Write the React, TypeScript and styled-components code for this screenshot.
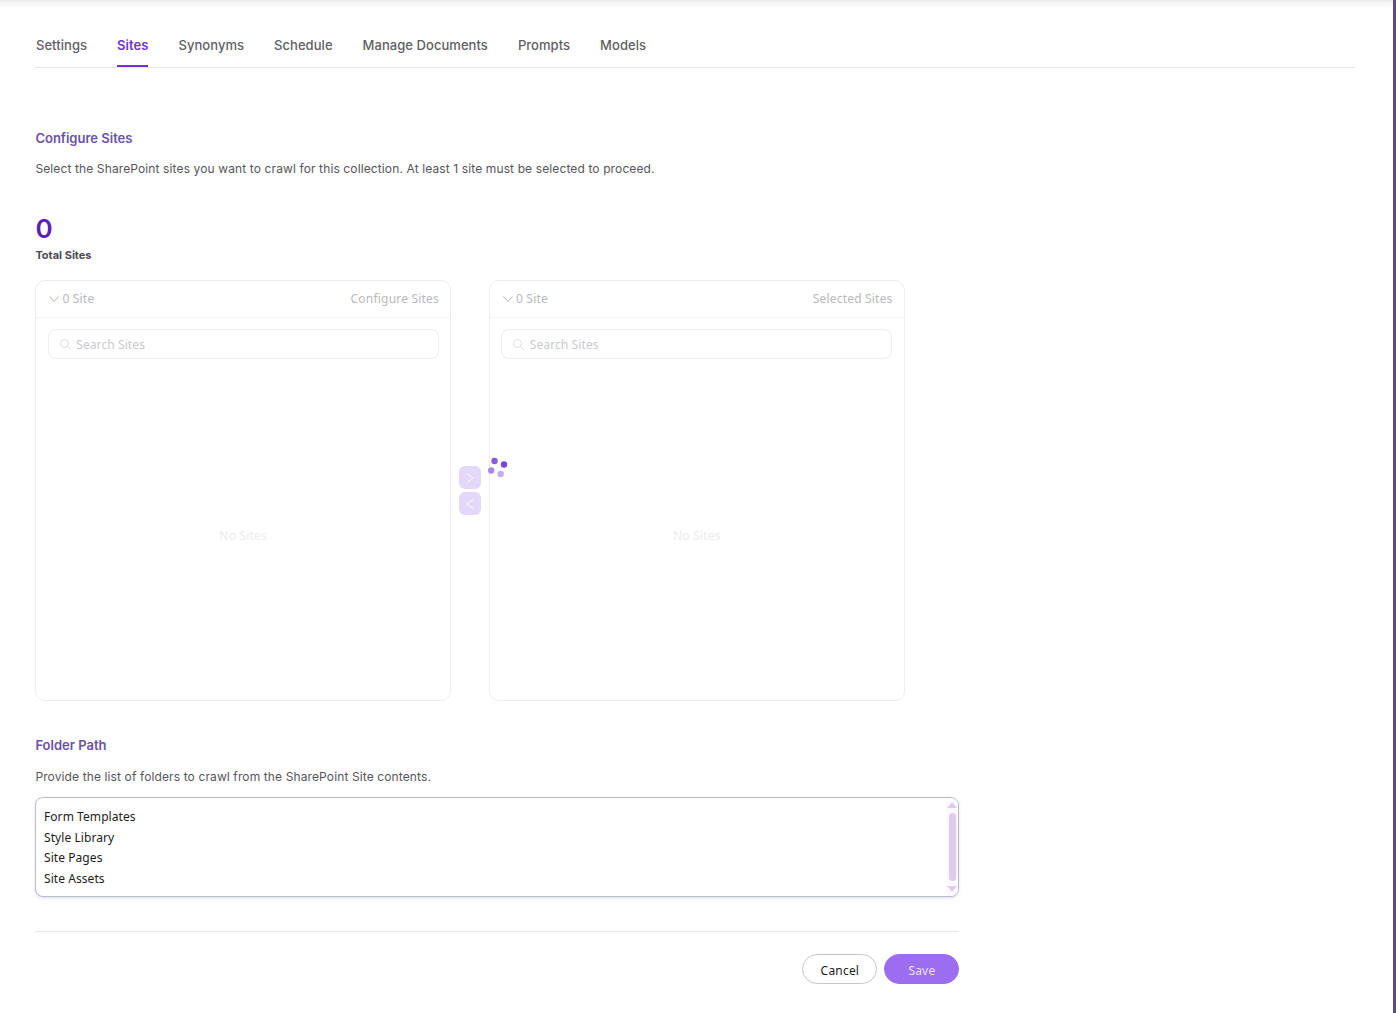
import React from "react";
import styled, { createGlobalStyle } from "styled-components";

const Global = createGlobalStyle`
  html, body { margin: 0; padding: 0; background: #fff; }
  body { font-family: Inter, "Liberation Sans", sans-serif; }
`;

const Page = styled.div`
  height: 1013px;
  overflow: hidden;
  box-sizing: border-box;
  border-right: 3px solid #5b4b8a;
  background: linear-gradient(#ececec 0, #f8f8f8 4px, #fff 9px);
  padding: 26px 38px 0 35.4px;
`;

const Tabs = styled.nav`
  display: flex;
  gap: 30px;
  height: 41px;
  padding-left: 0.6px;
  border-bottom: 1px solid #e5e5ea;
`;

const Tab = styled.a<{ $active?: boolean }>`
  font-size: 13px;
  font-weight: ${(p) => (p.$active ? 600 : 500)};
  letter-spacing: 0.05px;
  line-height: 38px;
  height: 41px;
  box-sizing: border-box;
  color: ${(p) => (p.$active ? "#7030dc" : "#5f5f66")};
  border-bottom: 2px solid ${(p) => (p.$active ? "#6d32d8" : "transparent")};
`;

const Heading = styled.h2<{ $top: number }>`
  margin: ${(p) => p.$top}px 0 0;
  font-size: 13px;
  font-weight: 600;
  line-height: 20px;
  color: #6a52a6;
`;

const Description = styled.p<{ $top: number }>`
  margin: ${(p) => p.$top}px 0 0;
  font-size: 12px;
  line-height: 18px;
  letter-spacing: 0.12px;
  color: #55555c;
`;

const Count = styled.div`
  margin-top: 35px;
  font-size: 26px;
  font-weight: 600;
  line-height: 32px;
  color: #5b21b6;
`;

const CountLabel = styled.div`
  margin-top: 2px;
  font-size: 11px;
  font-weight: 700;
  line-height: 16px;
  color: #4b4b55;
`;

const Transfer = styled.div`
  margin-top: 17px;
  display: flex;
  align-items: stretch;
  width: 870px;
`;

const Panel = styled.section`
  width: 415.6px;
  height: 421px;
  box-sizing: border-box;
  border: 1px solid #ececef;
  border-radius: 10px;
  display: flex;
  flex-direction: column;
  font-family: "Noto Sans", sans-serif;
`;

const PanelHeader = styled.header`
  height: 37px;
  box-sizing: border-box;
  flex: none;
  padding: 0 11px 2px 12px;
  border-bottom: 1px solid #f5f5f6;
  display: flex;
  align-items: center;
  justify-content: space-between;
  font-size: 12px;
  letter-spacing: 0.2px;
  color: #b8b8bd;
`;

const HeaderCount = styled.span`
  display: flex;
  align-items: center;
  gap: 2px;
`;

const SearchBox = styled.div`
  margin: 11px 0 0 11.3px;
  width: 391px;
  height: 30px;
  flex: none;
  box-sizing: border-box;
  border: 1px solid #ececef;
  border-radius: 8px;
  padding: 0 10px;
  display: flex;
  align-items: center;
  gap: 4.5px;
  font-size: 12px;
  letter-spacing: 0.1px;
  color: #c9c9cd;
`;

const Empty = styled.div`
  flex: 1;
  padding-top: 12px;
  display: flex;
  align-items: center;
  justify-content: center;
  font-size: 12px;
  letter-spacing: 0.2px;
  color: #ececee;
`;

const Operations = styled.div`
  position: relative;
  width: 38px;
  display: flex;
  flex-direction: column;
  align-items: center;
  justify-content: flex-start;
  padding-top: 186px;
  gap: 3px;
`;

const OpButton = styled.div`
  width: 22px;
  height: 23px;
  border-radius: 6px;
  background: #e4d8fa;
  display: flex;
  align-items: center;
  justify-content: center;
`;

const Spinner = styled.svg`
  position: absolute;
  left: 36px;
  top: 176px;
`;

const FolderWrap = styled.div`
  position: relative;
  width: 924px;
  height: 100px;
  margin-top: 11px;
`;

const FolderField = styled.textarea`
  display: block;
  width: 100%;
  height: 100%;
  margin: 0;
  box-sizing: border-box;
  padding: 9px 8px 0 7.6px;
  border: 1px solid #b9bdcb;
  border-radius: 8px;
  box-shadow: 0 1px 3px rgba(120, 125, 150, 0.25);
  resize: none;
  outline: none;
  overflow: hidden;
  font-family: "Noto Sans", sans-serif;
  font-size: 12px;
  letter-spacing: 0.07px;
  line-height: 20.7px;
  color: #1c1c22;
  background: #fff;
`;

const ScrollTrack = styled.div`
  position: absolute;
  top: 1px;
  right: 1px;
  bottom: 1px;
  width: 12px;
  box-sizing: border-box;
  padding: 4px 0;
  border-radius: 0 7px 7px 0;
  background: #fbf9fd;
  display: flex;
  flex-direction: column;
  align-items: center;
  justify-content: space-between;
`;

const ScrollThumb = styled.div`
  width: 7px;
  height: 68px;
  border-radius: 4px;
  background: #dfcbee;
`;

const Footer = styled.footer`
  width: 924px;
  margin-top: 34px;
  border-top: 1px solid #e7e7ea;
  padding-top: 22px;
  display: flex;
  justify-content: flex-end;
  gap: 7px;
`;

const Button = styled.button<{ $primary?: boolean }>`
  width: 75px;
  height: 30px;
  box-sizing: border-box;
  border-radius: 15px;
  border: 1px solid ${(p) => (p.$primary ? "#9d6df0" : "#c3c7d3")};
  background: ${(p) => (p.$primary ? "#9d6df0" : "#fff")};
  color: ${(p) => (p.$primary ? "#ece2fc" : "#1c1c22")};
  font-family: "Noto Sans", sans-serif;
  font-size: 12px;
  letter-spacing: 0.2px;
  padding: 3px 0 0;
`;

const Chevron = () => (
  <svg width="12" height="12" viewBox="0 0 12 12" fill="none" stroke="#b4b4ba" strokeWidth="1">
    <path d="M1.5 4.5l4.5 5 4.5-5" />
  </svg>
);

const SearchIcon = () => (
  <svg width="13" height="13" viewBox="0 0 13 13" fill="none" stroke="#dcdce0" strokeWidth="1">
    <circle cx="5.5" cy="5.5" r="4" />
    <path d="M8.5 8.5l3.5 3.5" />
  </svg>
);

const Arrow = ({ d }: { d: string }) => (
  <svg width="12" height="12" viewBox="0 0 12 12" fill="none" stroke="#fbf9ff" strokeWidth="1">
    <path d={d} />
  </svg>
);

const ScrollArrow = ({ d }: { d: string }) => (
  <svg width="10" height="6" viewBox="0 0 10 6" fill="#dfcbee">
    <path d={d} />
  </svg>
);

const SitePanel = ({ title }: { title: string }) => (
  <Panel>
    <PanelHeader>
      <HeaderCount>
        <Chevron />0 Site
      </HeaderCount>
      <span>{title}</span>
    </PanelHeader>
    <SearchBox>
      <SearchIcon />
      Search Sites
    </SearchBox>
    <Empty>No Sites</Empty>
  </Panel>
);

const tabs = ["Settings", "Sites", "Synonyms", "Schedule", "Manage Documents", "Prompts", "Models"];

export default function App() {
  return (
    <Page>
      <Global />
      <Tabs>
        {tabs.map((t) => (
          <Tab key={t} $active={t === "Sites"}>
            {t}
          </Tab>
        ))}
      </Tabs>
      <Heading $top={60}>Configure Sites</Heading>
      <Description $top={12}>
        Select the SharePoint sites you want to crawl for this collection. At least 1 site must be selected to proceed.
      </Description>
      <Count>0</Count>
      <CountLabel>Total Sites</CountLabel>
      <Transfer>
        <SitePanel title="Configure Sites" />
        <Operations>
          <OpButton>
            <Arrow d="M3 1.5l6 4.5-6 4.5" />
          </OpButton>
          <OpButton>
            <Arrow d="M9 1.5l-6 4.5 6 4.5" />
          </OpButton>
          <Spinner width="22" height="22" viewBox="0 0 22 22">
            <circle cx="7.5" cy="5" r="3.2" fill="#8a5be0" />
            <circle cx="17" cy="8.5" r="3.2" fill="#7a45dc" />
            <circle cx="13.7" cy="18" r="3.2" fill="#c6adf0" />
            <circle cx="4.2" cy="14.5" r="3.2" fill="#ab87ea" />
          </Spinner>
        </Operations>
        <SitePanel title="Selected Sites" />
      </Transfer>
      <Heading $top={34}>Folder Path</Heading>
      <Description $top={13}>Provide the list of folders to crawl from the SharePoint Site contents.</Description>
      <FolderWrap>
        <FolderField readOnly value={"Form Templates\nStyle Library\nSite Pages\nSite Assets"} />
        <ScrollTrack>
          <ScrollArrow d="M5 0l5 6H0z" />
          <ScrollThumb />
          <ScrollArrow d="M0 0h10L5 6z" />
        </ScrollTrack>
      </FolderWrap>
      <Footer>
        <Button>Cancel</Button>
        <Button $primary>Save</Button>
      </Footer>
    </Page>
  );
}
